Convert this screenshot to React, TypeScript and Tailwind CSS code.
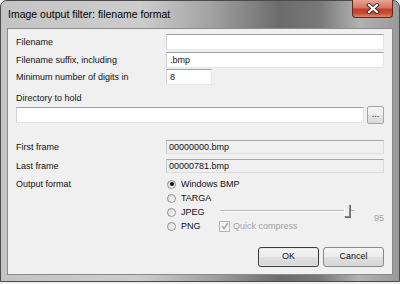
import React from 'react';

const Field = ({ value, className = '' }: { value?: string; className?: string }) => (
  <div
    className={`h-[16px] flex items-center pl-[3px] bg-white border border-[#e2e6eb] border-t-[#9da0a6] border-l-[#d0d4da] text-[9px] leading-none ${className}`}
  >
    {value}
  </div>
);

const ReadOnly = ({ value }: { value: string }) => (
  <div className="h-[14px] flex items-center pl-[2px] bg-[#f0f0f0] border border-[#dcdcdc] border-t-[#a6a6a6] border-l-[#c8c8c8] text-[9px] leading-none">
    {value}
  </div>
);

const Radio = ({ checked = false, label }: { checked?: boolean; label: string }) => (
  <div className="flex items-center h-[14px]">
    <div className="ml-[1px] w-[9px] h-[9px] rounded-full border border-[#8e8f8f] bg-[linear-gradient(135deg,#d8d8d8,#ffffff)] flex items-center justify-center">
      {checked && <div className="w-[4px] h-[4px] rounded-full bg-[#111]" />}
    </div>
    <span className="ml-[5px] text-[9px] leading-none">{label}</span>
  </div>
);

const Label = ({ text, className = '' }: { text: string; className?: string }) => (
  <div className={`w-[150px] shrink-0 text-[9px] leading-none ${className}`}>{text}</div>
);

export default function App() {
  return (
    <div className="w-[400px] h-[284px] bg-[#f0f0f0] font-['Liberation_Sans',Arial,sans-serif] text-[#111] overflow-hidden">
      <div className="relative w-[400px] h-[282px] rounded-t-[7px] border border-[#4a4a4a] bg-[linear-gradient(90deg,#c4c4c4_0%,#cdcdcd_35%,#a4a4a4_52%,#6c6c6c_70%,#787878_80%,#b2b2b2_90%,#9a9a9a_100%)]">
        {/* title bar */}
        <div className="h-[27px] flex items-center pl-[7px] pt-[1px] text-[10.5px] text-black">
          Image output filter: filename format
        </div>
        <div className="absolute top-[-1px] right-[6px] w-[41px] h-[18px] rounded-b-[4px] border border-[#5b2a22] border-t-0 bg-[linear-gradient(180deg,#e9a594_0%,#d27561_45%,#c2402a_55%,#c94e34_80%,#e08a6a_100%)] flex items-center justify-center">
          <svg width="14" height="11" viewBox="0 0 14 11">
            <path d="M3 2 L11 9 M11 2 L3 9" stroke="#3b2a2a" strokeWidth="4" strokeLinecap="square" />
            <path d="M3 2 L11 9 M11 2 L3 9" stroke="#ffffff" strokeWidth="2.2" strokeLinecap="square" />
          </svg>
        </div>

        {/* client area */}
        <div className="mx-[6px] h-[247px] bg-[#f0f0f0] border border-[#8a8a8a] px-[8px] flex flex-col">
          <div className="mt-[5px] flex items-center h-[16px]">
            <Label text="Filename" />
            <Field className="flex-1" />
          </div>
          <div className="mt-[2px] flex items-center h-[16px]">
            <Label text="Filename suffix, including" />
            <Field className="flex-1" value=".bmp" />
          </div>
          <div className="mt-[1px] flex items-center h-[16px]">
            <Label text="Minimum number of digits in" />
            <Field className="w-[46px]" value="8" />
          </div>
          <div className="mt-[7px] text-[9px] leading-[12px]">Directory to hold</div>
          <div className="mt-[2px] flex items-center h-[18px] gap-[3px]">
            <Field className="flex-1" />
            <div className="w-[17px] h-[18px] border border-[#a5a5a5] rounded-[2px] bg-[linear-gradient(180deg,#f4f4f4_0%,#eeeeee_50%,#e4e4e4_51%,#dadada_100%)] flex items-end justify-center pb-[4px] text-[9px] leading-none">
              ...
            </div>
          </div>
          <div className="mt-[16px] flex items-center h-[14px]">
            <Label text="First frame" />
            <div className="flex-1">
              <ReadOnly value="00000000.bmp" />
            </div>
          </div>
          <div className="mt-[5px] flex items-center h-[14px]">
            <Label text="Last frame" />
            <div className="flex-1">
              <ReadOnly value="00000781.bmp" />
            </div>
          </div>
          <div className="mt-[4px] flex">
            <Label text="Output format" className="pt-[3px]" />
            <div className="flex-1 flex flex-col">
              <Radio checked label="Windows BMP" />
              <Radio label="TARGA" />
              <div className="flex h-[14px]">
                <div className="w-[54px] shrink-0">
                  <Radio label="JPEG" />
                </div>
                <div className="relative w-[135px] h-[14px]">
                  <div className="absolute left-0 right-0 top-[5px] h-[2px] bg-[#b9b9b9] border-b border-white" />
                  <div className="absolute left-[124px] top-[-1px] w-[6px] h-[13px] bg-[#ececec] border border-[#8a8a8a] border-l-white border-t-white shadow-[1px_1px_0_#6a6a6a]" />
                </div>
                <div className="ml-[19px] pt-[9px] text-[9px] leading-none text-[#a0a0a0]">95</div>
              </div>
              <div className="flex h-[14px] items-center">
                <div className="w-[53px] shrink-0">
                  <Radio label="PNG" />
                </div>
                <div className="w-[11px] h-[11px] border border-[#b4b4b4] bg-[#f4f4f4] flex items-center justify-center">
                  <svg width="8" height="8" viewBox="0 0 8 8">
                    <path d="M1 4 L3 6.5 L7 1" fill="none" stroke="#a8a8a8" strokeWidth="1.4" />
                  </svg>
                </div>
                <span className="ml-[3px] text-[9px] leading-none text-[#a3a3a3]">Quick compress</span>
              </div>
            </div>
          </div>
          <div className="mt-[14px] flex justify-end gap-[4px]">
            <div className="w-[61px] h-[20px] rounded-[3px] border border-[#3c3c3c] shadow-[inset_0_0_0_1px_#e8e8e8] bg-[linear-gradient(180deg,#f4f4f4_0%,#ececec_50%,#e0e0e0_51%,#d6d6d6_100%)] flex items-center justify-center text-[9px]">
              OK
            </div>
            <div className="w-[61px] h-[20px] rounded-[3px] border border-[#8a8a8a] bg-[linear-gradient(180deg,#f4f4f4_0%,#ececec_50%,#e0e0e0_51%,#d6d6d6_100%)] flex items-center justify-center text-[9px]">
              Cancel
            </div>
          </div>
        </div>
      </div>
    </div>
  );
}
